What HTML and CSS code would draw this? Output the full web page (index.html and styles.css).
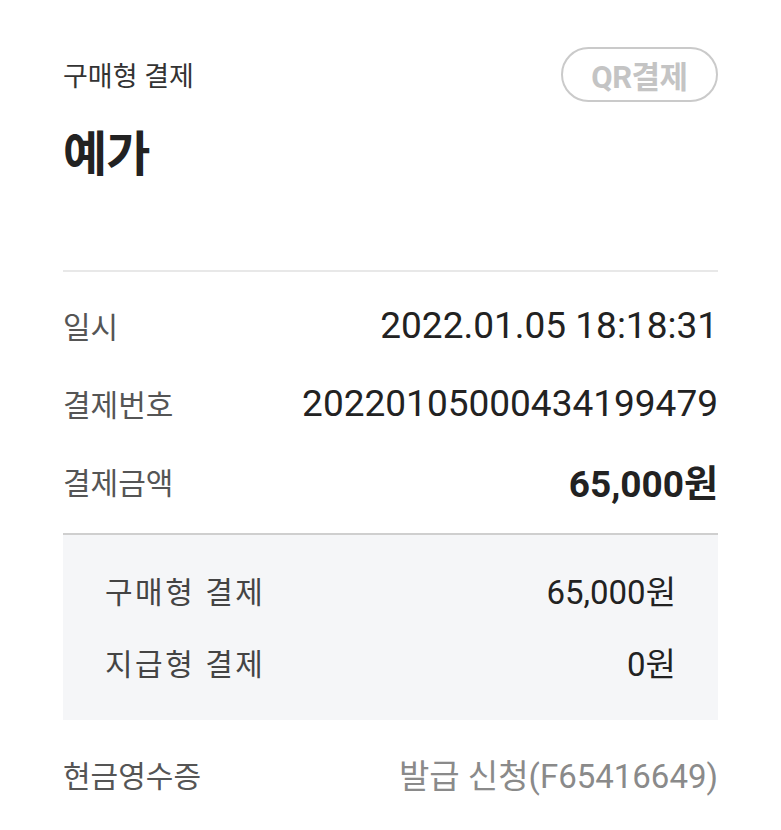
FILE: index.html
```html
<!DOCTYPE html>
<html lang="ko">
<head>
<meta charset="utf-8">
<link rel="stylesheet" href="styles.css">
</head>
<body>
<div class="page">
  <div class="header">
    <div class="kind">구매형 결제</div>
    <div class="qr">QR결제</div>
  </div>
  <div class="title">예가</div>
  <div class="divider"></div>
  <div class="rows">
    <div class="row"><span class="label">일시</span><span class="value">2022.01.05 18:18:31</span></div>
    <div class="row"><span class="label">결제번호</span><span class="value">20220105000434199479</span></div>
    <div class="row"><span class="label">결제금액</span><span class="value strong">65,000원</span></div>
  </div>
  <div class="breakdown">
    <div class="brow"><span class="blabel">구매형 결제</span><span class="bvalue">65,000원</span></div>
    <div class="brow"><span class="blabel">지급형 결제</span><span class="bvalue">0원</span></div>
  </div>
  <div class="row receipt"><span class="label">현금영수증</span><span class="value muted">발급 신청(F65416649)</span></div>
</div>
</body>
</html>
```

FILE: styles.css
```css
html, body {
  margin: 0;
  padding: 0;
  background: #ffffff;
}
body {
  font-family: Roboto, "Noto Sans CJK KR", sans-serif;
  color: #222222;
}
.page {
  padding: 47px 63px 0 63px;
}
.header {
  display: flex;
  justify-content: space-between;
  align-items: center;
}
.kind {
  font-size: 27px;
  color: #333333;
}
.qr {
  box-sizing: border-box;
  width: 157px;
  height: 55px;
  border: 2px solid #cacaca;
  border-radius: 28px;
  display: flex;
  align-items: center;
  justify-content: center;
  font-size: 31px;
  font-weight: 700;
  color: #c4c4c4;
  letter-spacing: -0.5px;
}
.title {
  margin-top: 20px;
  font-size: 48px;
  font-weight: 700;
  line-height: 66px;
  color: #222222;
  letter-spacing: -1px;
}
.divider {
  margin-top: 82px;
  height: 2px;
  background: #e8e8e8;
}
.rows {
  padding-top: 14px;
  padding-bottom: 13px;
}
.row {
  display: flex;
  justify-content: space-between;
  align-items: center;
  height: 78px;
}
.label {
  font-size: 30px;
  color: #555555;
}
.value {
  font-size: 37px;
  color: #222222;
}
.value.strong {
  font-weight: 700;
}
.breakdown {
  border-top: 2px solid #cfcfcf;
  background: #f5f6f8;
  padding: 19px 42px 22px 42px;
}
.brow {
  display: flex;
  justify-content: space-between;
  align-items: center;
  height: 72px;
}
.blabel {
  font-size: 30px;
  color: #444444;
  letter-spacing: 2.5px;
}
.bvalue {
  font-size: 33px;
  color: #222222;
}
.receipt {
  margin-top: 15px;
}
.value.muted {
  font-size: 33px;
  color: #8a8a8a;
}
```
